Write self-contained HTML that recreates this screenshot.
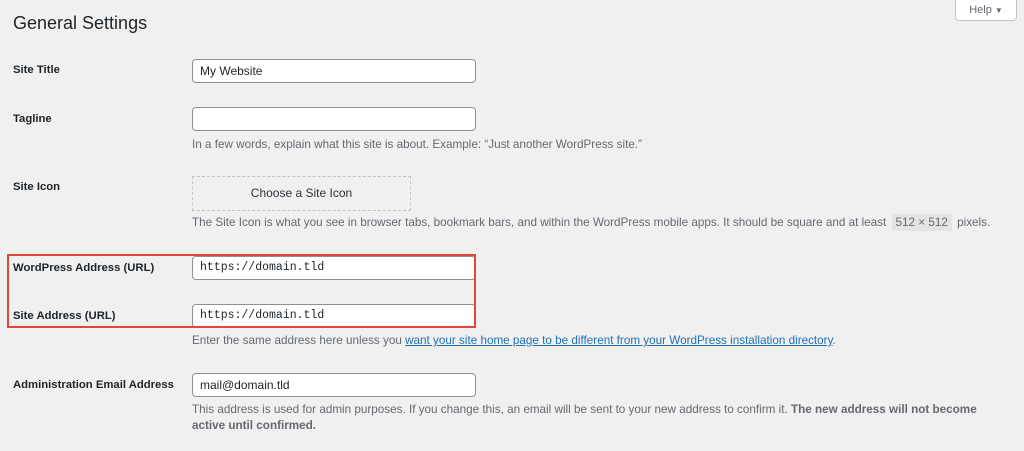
<!DOCTYPE html>
<html><head><meta charset="utf-8"><style>
body{margin:0;width:1024px;height:451px;background:#f0f0f1;font-family:"Liberation Sans",Arial,sans-serif;color:#1d2327;position:relative;overflow:hidden;font-size:11.5px}
.a{position:absolute;white-space:nowrap}
h1{position:absolute;left:13px;top:13px;margin:0;font-size:18px;font-weight:400;color:#1d2327}
.l{position:absolute;left:13px;font-weight:bold;font-size:11.3px;color:#1d2327}
.i{position:absolute;left:192px;background:#fff;border:1px solid #8c8f94;border-radius:4px;line-height:22px;padding-left:7px;box-sizing:border-box;width:284px;height:24px;font-size:12px}
.m{font-family:"Liberation Mono",monospace;font-size:11.5px}
.d{position:absolute;left:192px;color:#646970;font-size:11.7px;white-space:nowrap}
</style></head><body>
<div class="a" style="left:955px;top:-1px;width:62px;height:22px;background:#fff;border:1px solid #c3c4c7;border-radius:0 0 4px 4px;box-sizing:border-box;color:#646970;font-size:11px;line-height:20px;text-align:center">Help <span style="font-size:8px">▼</span></div>
<h1>General Settings</h1>
<div class="l" style="top:64px">Site Title</div>
<div class="i" style="top:59px">My Website</div>
<div class="l" style="top:113px">Tagline</div>
<div class="i" style="top:107px"></div>
<div class="d" style="top:138px">In a few words, explain what this site is about. Example: “Just another WordPress site.”</div>
<div class="l" style="top:181px">Site Icon</div>
<div class="a" style="left:192px;top:176px;width:219px;height:35px;border:1px dashed #c3c4c7;box-sizing:border-box;text-align:center;line-height:33px;font-size:12px;color:#2c3338">Choose a Site Icon</div>
<div class="d" style="top:216px">The Site Icon is what you see in browser tabs, bookmark bars, and within the WordPress mobile apps. It should be square and at least <span style="background:#e4e4e5;padding:2px 4px;margin:0 2px">512 × 512</span> pixels.</div>
<div class="l" style="top:262px">WordPress Address (URL)</div>
<div class="i m" style="top:256px">https://domain.tld</div>
<div class="l" style="top:310px">Site Address (URL)</div>
<div class="i m" style="top:304px">https://domain.tld</div>
<div class="a" style="left:7px;top:254px;width:469px;height:74px;border:2px solid #e2463a;box-sizing:border-box"></div>
<div class="d" style="top:334px">Enter the same address here unless you <span style="color:#2271b1;text-decoration:underline">want your site home page to be different from your WordPress installation directory</span>.</div>
<div class="l" style="top:379px">Administration Email Address</div>
<div class="i" style="top:373px">mail@domain.tld</div>
<div class="d" style="top:403px">This address is used for admin purposes. If you change this, an email will be sent to your new address to confirm it. <b>The new address will not become</b></div>
<div class="d" style="top:419px"><b>active until confirmed.</b></div>
</body></html>
